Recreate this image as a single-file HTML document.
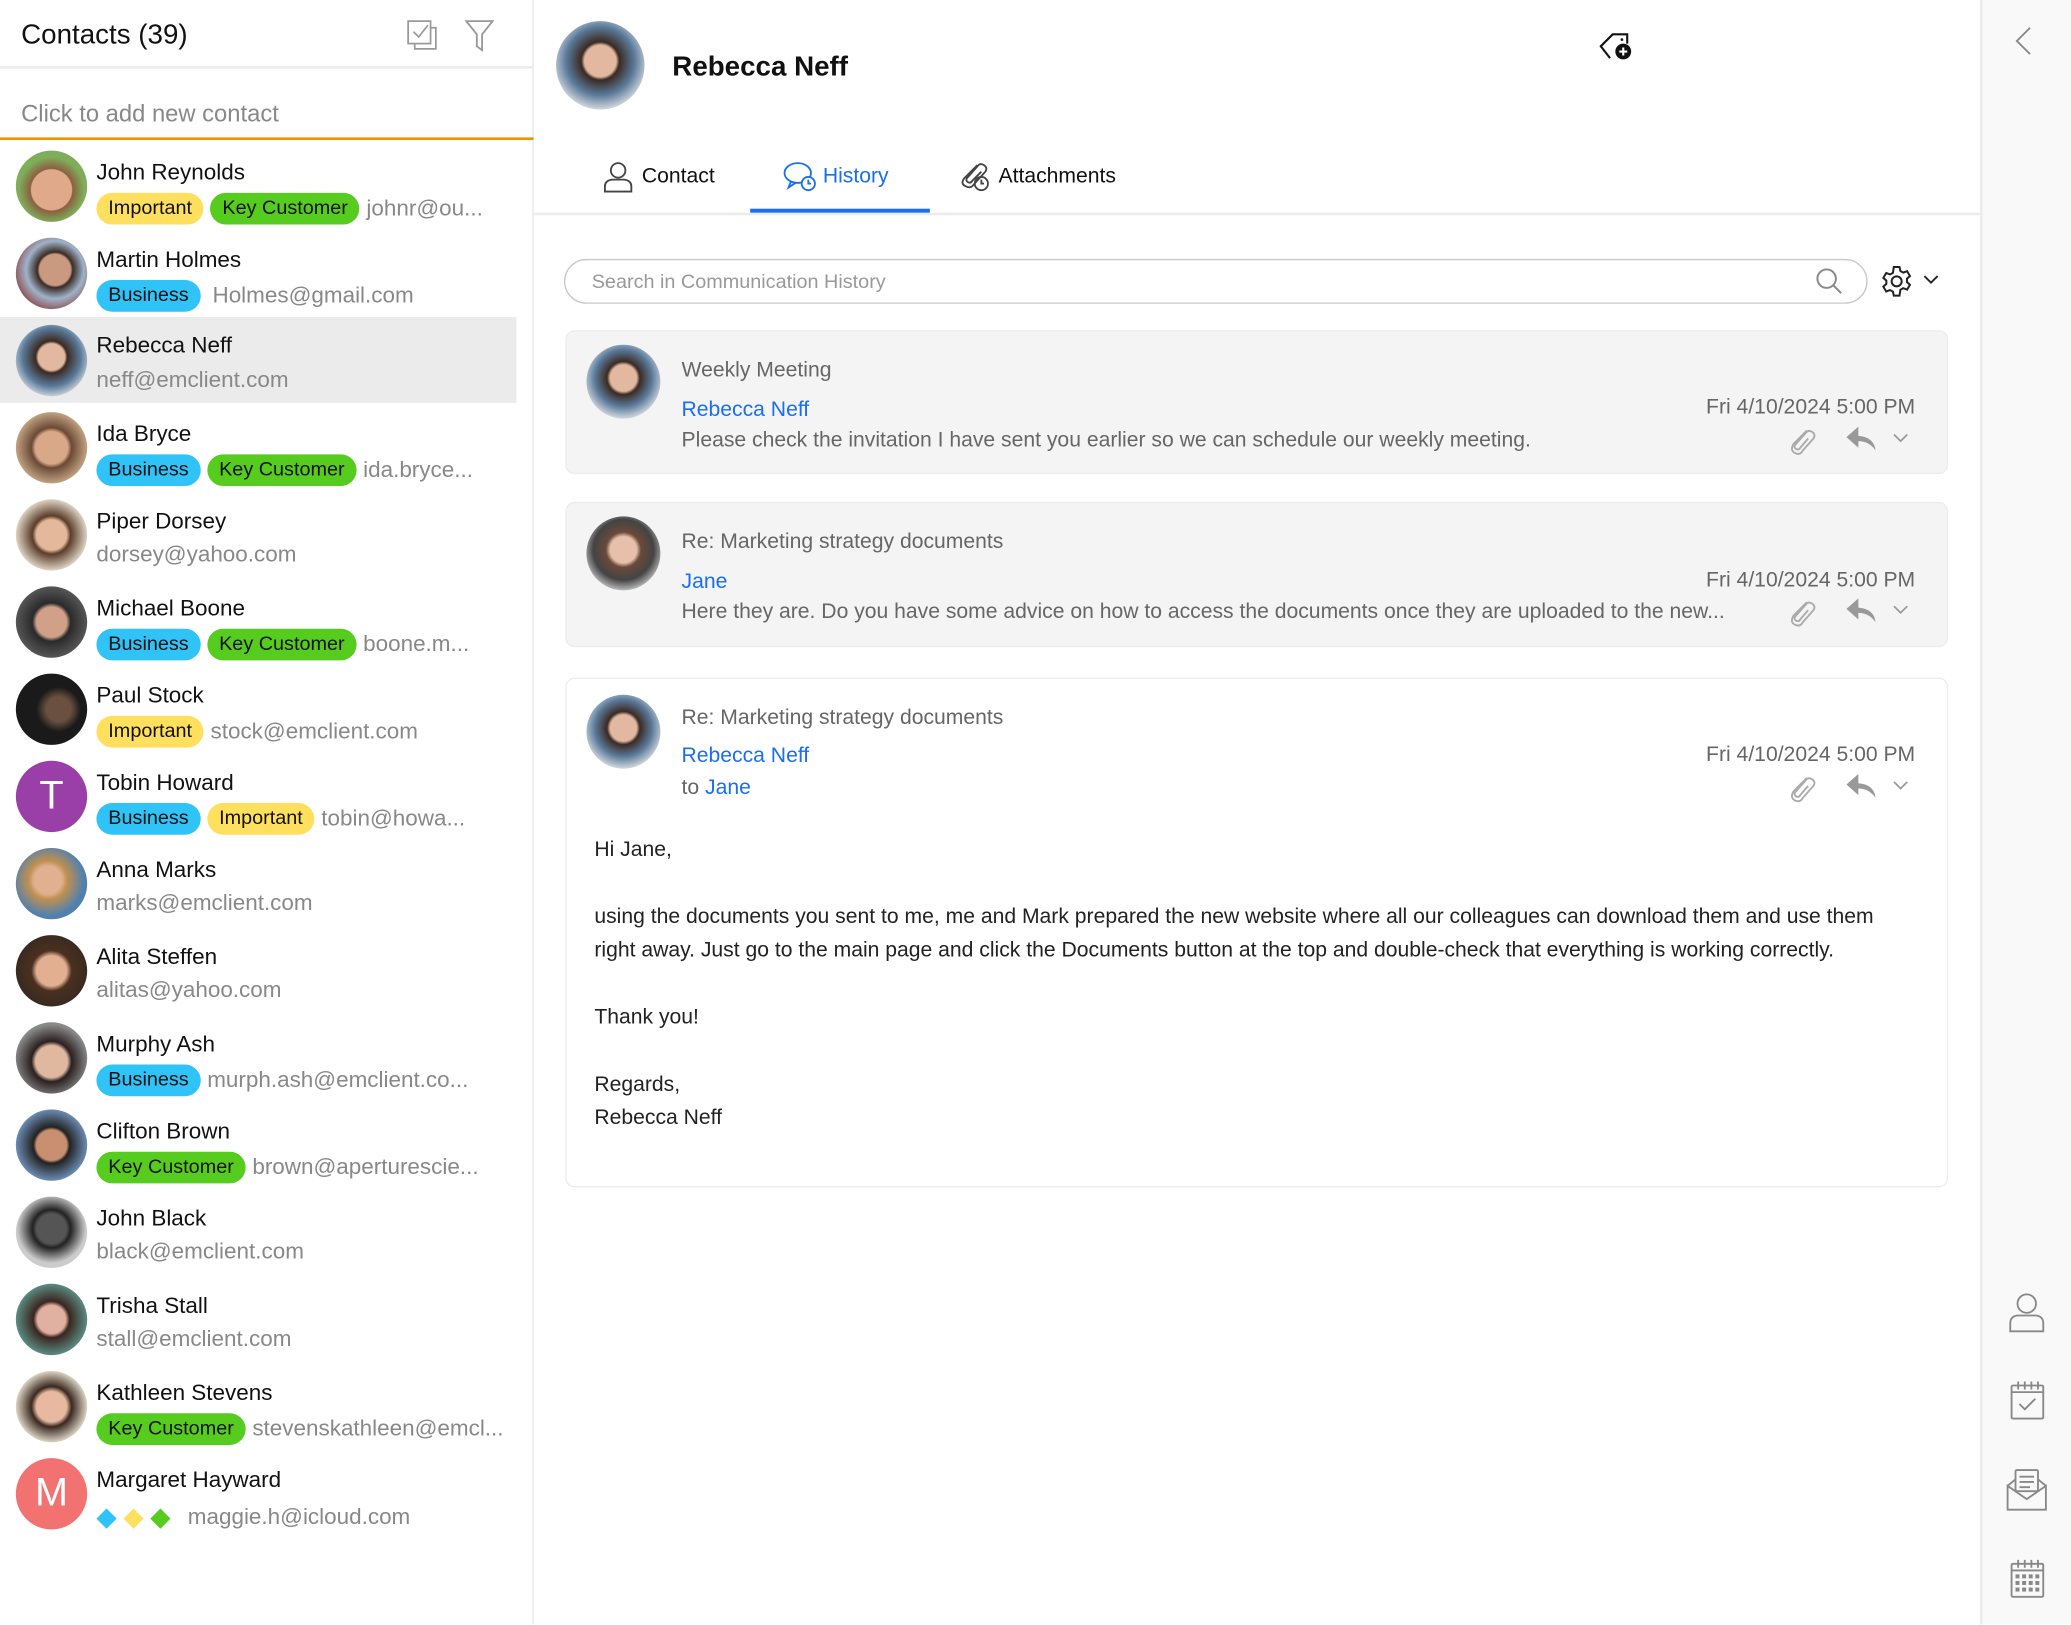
<!DOCTYPE html>
<html><head><meta charset="utf-8"><style>
*{box-sizing:border-box;margin:0;padding:0}
html,body{width:2071px;height:1624px;overflow:hidden;background:#fff;font-family:"Liberation Sans",sans-serif}
#w{position:absolute;left:0;top:0;width:1568px;height:1230px;transform:scale(1.32079);transform-origin:0 0}
.a{position:absolute}
.left{left:0;top:0;width:404px;height:1230px;border-right:1px solid #e6e6e6}
.row{position:absolute;left:0;width:391px;height:66px}
.av{position:absolute;left:12px;top:4px;width:54px;height:54px;border-radius:50%}
.nm{position:absolute;left:73px;top:11px;font-size:17px;color:#111;white-space:nowrap}
.l2{position:absolute;left:73px;top:36px;font-size:17px;color:#888;white-space:nowrap;display:flex;align-items:center;gap:5px}
.tg{display:inline-block;height:24px;line-height:24px;border-radius:12px;padding:0 9px;font-size:15px;color:#111}
.imp{background:#ffdf5e}.key{background:#56cc1f}.bus{background:#2fc3f8}
.card{position:absolute;left:428px;width:1047px;border-radius:7px;background:#f4f4f4;border:1px solid #ececec}
.cav{position:absolute;left:15px;top:10px;width:56px;height:56px;border-radius:50%}
.subj{position:absolute;left:87px;font-size:16px;color:#666}
.from{position:absolute;left:87px;font-size:16px;color:#1a6ef0}
.date{position:absolute;right:24px;font-size:16px;color:#666}
.prev{position:absolute;left:87px;font-size:16px;color:#666;white-space:nowrap}
.ic{position:absolute}
.body p{position:absolute;left:21px;font-size:16px;color:#222;white-space:nowrap}
</style></head><body><div id="w">
<div class="a left">
 <div class="a" style="left:16px;top:15px;font-size:21px;color:#111">Contacts (39)</div>
 <svg class="a" style="left:308px;top:15px" width="24" height="24" viewBox="0 0 24 24" fill="none" stroke="#999" stroke-width="1.3"><rect x="1" y="1" width="17" height="17"/><path d="M18 6h4v16H6v-4"/><path d="M5 9l4 4 7-9"/></svg>
 <svg class="a" style="left:352px;top:15px" width="22" height="24" viewBox="0 0 22 24" fill="none" stroke="#999" stroke-width="1.4"><path d="M1 1h20l-8 10v12l-4-3v-9z"/></svg>
 <div class="a" style="left:0;top:50px;width:403px;height:2px;background:#ececec"></div>
 <div class="a" style="left:16px;top:76px;font-size:18px;color:#888">Click to add new contact</div>
 <div class="a" style="left:0;top:104px;width:404px;height:2px;background:#f39200"></div>

 <div class="row" style="top:110px"><div class="av" style="background:radial-gradient(circle at 50% 55%,#e0a98a 0 38%,#8a6040 40%,#7fae5a 62%)"></div><div class="nm">John Reynolds</div><div class="l2"><span class="tg imp">Important</span><span class="tg key">Key Customer</span><span>johnr@ou...</span></div></div>
 <div class="row" style="top:176px"><div class="av" style="background:radial-gradient(circle at 55% 45%,#c99a80 0 28%,#3a2a25 32%,#9fb3c9 52%,#8a3a3a 80%)"></div><div class="nm">Martin Holmes</div><div class="l2"><span class="tg bus">Business</span><span style="margin-left:4px">Holmes@gmail.com</span></div></div>
 <div class="row" style="top:240px;background:#ebebeb;height:65px"><div class="av" style="top:6px;background:radial-gradient(circle at 50% 45%,#e2b8a0 0 25%,#3b2a22 30%,#5a7a9a 55%,#e8e8ea 80%)"></div><div class="nm" style="top:12px">Rebecca Neff</div><div class="l2" style="top:38px">neff@emclient.com</div></div>
 <div class="row" style="top:308px"><div class="av" style="background:radial-gradient(circle at 50% 50%,#d9a888 0 32%,#6a4a35 40%,#c0a080 70%)"></div><div class="nm">Ida Bryce</div><div class="l2"><span class="tg bus">Business</span><span class="tg key">Key Customer</span><span>ida.bryce...</span></div></div>
 <div class="row" style="top:374px"><div class="av" style="background:radial-gradient(circle at 50% 50%,#e4b89a 0 30%,#5a3d2a 38%,#dcd0c0 70%)"></div><div class="nm">Piper Dorsey</div><div class="l2">dorsey@yahoo.com</div></div>
 <div class="row" style="top:440px"><div class="av" style="background:radial-gradient(circle at 50% 50%,#d0a088 0 30%,#2a2a2a 38%,#555 70%)"></div><div class="nm">Michael Boone</div><div class="l2"><span class="tg bus">Business</span><span class="tg key">Key Customer</span><span>boone.m...</span></div></div>
 <div class="row" style="top:506px"><div class="av" style="background:radial-gradient(circle at 60% 50%,#6a5040 0 22%,#1a1a1a 40%)"></div><div class="nm">Paul Stock</div><div class="l2"><span class="tg imp">Important</span><span>stock@emclient.com</span></div></div>
 <div class="row" style="top:572px"><div class="av" style="background:#9b3fa8;color:#fff;font-size:30px;text-align:center;line-height:54px">T</div><div class="nm">Tobin Howard</div><div class="l2"><span class="tg bus">Business</span><span class="tg imp">Important</span><span>tobin@howa...</span></div></div>
 <div class="row" style="top:638px"><div class="av" style="background:radial-gradient(circle at 45% 45%,#e0b090 0 25%,#c09050 35%,#5080b0 65%)"></div><div class="nm">Anna Marks</div><div class="l2">marks@emclient.com</div></div>
 <div class="row" style="top:704px"><div class="av" style="background:radial-gradient(circle at 50% 50%,#e2b090 0 30%,#4a3020 40%,#3a2a20 70%)"></div><div class="nm">Alita Steffen</div><div class="l2">alitas@yahoo.com</div></div>
 <div class="row" style="top:770px"><div class="av" style="background:radial-gradient(circle at 50% 55%,#e0b8a0 0 30%,#2a2020 38%,#8a8a8a 70%)"></div><div class="nm">Murphy Ash</div><div class="l2"><span class="tg bus">Business</span><span>murph.ash@emclient.co...</span></div></div>
 <div class="row" style="top:836px"><div class="av" style="background:radial-gradient(circle at 50% 50%,#c89070 0 30%,#222 36%,#6a8ab0 70%)"></div><div class="nm">Clifton Brown</div><div class="l2"><span class="tg key">Key Customer</span><span>brown@aperturescie...</span></div></div>
 <div class="row" style="top:902px"><div class="av" style="background:radial-gradient(circle at 50% 45%,#555 0 28%,#222 36%,#ccc 65%)"></div><div class="nm">John Black</div><div class="l2">black@emclient.com</div></div>
 <div class="row" style="top:968px"><div class="av" style="background:radial-gradient(circle at 50% 50%,#e0b0a0 0 28%,#3a2520 36%,#5a8a80 70%)"></div><div class="nm">Trisha Stall</div><div class="l2">stall@emclient.com</div></div>
 <div class="row" style="top:1034px"><div class="av" style="background:radial-gradient(circle at 50% 50%,#e8b8a0 0 30%,#3a2820 40%,#d8d0c0 70%)"></div><div class="nm">Kathleen Stevens</div><div class="l2"><span class="tg key">Key Customer</span><span>stevenskathleen@emcl...</span></div></div>
 <div class="row" style="top:1100px"><div class="av" style="background:#f27272;color:#fff;font-size:30px;text-align:center;line-height:54px">M</div><div class="nm">Margaret Hayward</div><div class="l2"><span style="color:#2fc3f8;font-size:20px">&#9670;</span><span style="color:#ffdf5e;font-size:20px">&#9670;</span><span style="color:#56cc1f;font-size:20px">&#9670;</span><span style="margin-left:8px">maggie.h@icloud.com</span></div></div>
</div>

<!-- middle -->
<div class="a" style="left:421px;top:16px;width:67px;height:67px;border-radius:50%;background:radial-gradient(circle at 50% 45%,#e2b8a0 0 24%,#3b2a22 29%,#5a7a9a 52%,#e8e8ea 78%)"></div>
<div class="a" style="left:509px;top:39px;font-size:21px;font-weight:bold;color:#111">Rebecca Neff</div>
<svg class="a" style="left:1210px;top:20px" width="28" height="28" viewBox="0 0 28 28"><path d="M18 6h-7l-9 9 7 9" fill="none" stroke="#111" stroke-width="1.6"/><path d="M18 6h4v7" fill="none" stroke="#111" stroke-width="1.6"/><circle cx="18" cy="10" r="1" fill="#111"/><circle cx="19" cy="19" r="6" fill="#111"/><path d="M19 16v6M16 19h6" stroke="#fff" stroke-width="1.6"/></svg>

<svg class="a" style="left:457px;top:122px" width="22" height="24" viewBox="0 0 22 24" fill="none" stroke="#444" stroke-width="1.4"><circle cx="11" cy="7" r="5.5"/><path d="M1 23v-4q0-4 5-5h10q5 1 5 5v4z"/></svg>
<div class="a" style="left:486px;top:125px;font-size:16px;color:#111">Contact</div>
<svg class="a" style="left:593px;top:122px" width="26" height="24" viewBox="0 0 26 24" fill="none" stroke="#1a6ef0" stroke-width="1.4"><ellipse cx="11" cy="9" rx="10" ry="7.5"/><path d="M6 15l-2 5 6-4"/><circle cx="19" cy="17" r="5" fill="#fff"/><path d="M19 14v3h2"/></svg>
<div class="a" style="left:623px;top:125px;font-size:16px;color:#1a6ef0">History</div>
<div class="a" style="left:568px;top:158px;width:136px;height:4px;background:#1a6ef0"></div>
<svg class="a" style="left:725px;top:121px" width="25" height="25" viewBox="0 0 25 25" fill="none" stroke="#444" stroke-width="1.4"><path d="M15 4L5 14q-3 4 1 6t6-1l9-10q2-3-1-5t-5 1l-8 9q-1 2 1 3t3-1l7-7"/><circle cx="18" cy="18" r="5"/><path d="M18 15v3h2"/></svg>
<div class="a" style="left:756px;top:125px;font-size:16px;color:#111">Attachments</div>
<div class="a" style="left:404px;top:161px;width:1096px;height:2px;background:#ececec"></div>

<div class="a" style="left:427px;top:196px;width:987px;height:34px;border:1.5px solid #c8c8c8;border-radius:17px"></div>
<div class="a" style="left:448px;top:205px;font-size:15px;color:#999">Search in Communication History</div>
<svg class="a" style="left:1374px;top:202px" width="22" height="22" viewBox="0 0 22 22" fill="none" stroke="#888" stroke-width="1.5"><circle cx="9" cy="9" r="7"/><path d="M14 14l6 6"/></svg>
<svg class="a" style="left:1423px;top:200px" width="26" height="26" viewBox="0 0 24 24" fill="none" stroke="#222" stroke-width="1.4"><circle cx="12" cy="12" r="3.5"/><path d="M10 2h4l.6 2.8 2 1.1 2.7-1 2 3.4-2.1 1.9v2.3l2.1 1.9-2 3.4-2.7-1-2 1.1L14 22h-4l-.6-2.8-2-1.1-2.7 1-2-3.4 2.1-1.9V11.5L2.7 9.6l2-3.4 2.7 1 2-1.1z"/></svg>
<svg class="a" style="left:1456px;top:208px" width="12" height="8" viewBox="0 0 12 8" fill="none" stroke="#222" stroke-width="1.4"><path d="M1 1l5 5 5-5"/></svg>

<!-- card 1 -->
<div class="card" style="top:250px;height:109px">
 <div class="cav" style="background:radial-gradient(circle at 50% 45%,#e2b8a0 0 24%,#3b2a22 30%,#5a7a9a 52%,#e8e8ea 78%)"></div>
 <div class="subj" style="top:21px">Weekly Meeting</div>
 <div class="from" style="top:51px">Rebecca Neff</div>
 <div class="date" style="top:49px">Fri 4/10/2024 5:00 PM</div>
 <div class="prev" style="top:74px">Please check the invitation I have sent you earlier so we can schedule our weekly meeting.</div>
 <svg class="ic" style="left:924px;top:71px" width="22" height="24" viewBox="0 0 22 24" fill="none" stroke="#aaa" stroke-width="1.4"><path d="M15 4L5 14q-3 5 1 7t6-2l8-9q2-3-1-5t-5 1l-8 9q-1 2 1 3t3-1l6-7"/></svg>
 <svg class="ic" style="left:968px;top:70px" width="24" height="22" viewBox="0 0 24 22"><path d="M10 2L1 10l9 8v-5q8 0 13 7-1-10-13-11z" fill="#999"/></svg>
 <svg class="ic" style="left:1004px;top:77px" width="12" height="8" viewBox="0 0 12 8" fill="none" stroke="#999" stroke-width="1.3"><path d="M1 1l5 5 5-5"/></svg>
</div>
<!-- card 2 -->
<div class="card" style="top:380px;height:110px">
 <div class="cav" style="background:radial-gradient(circle at 50% 45%,#e6c0aa 0 24%,#6a4a3a 32%,#444 55%,#ddd 80%)"></div>
 <div class="subj" style="top:21px">Re: Marketing strategy documents</div>
 <div class="from" style="top:51px">Jane</div>
 <div class="date" style="top:50px">Fri 4/10/2024 5:00 PM</div>
 <div class="prev" style="top:74px">Here they are. Do you have some advice on how to access the documents once they are uploaded to the new...</div>
 <svg class="ic" style="left:924px;top:71px" width="22" height="24" viewBox="0 0 22 24" fill="none" stroke="#aaa" stroke-width="1.4"><path d="M15 4L5 14q-3 5 1 7t6-2l8-9q2-3-1-5t-5 1l-8 9q-1 2 1 3t3-1l6-7"/></svg>
 <svg class="ic" style="left:968px;top:70px" width="24" height="22" viewBox="0 0 24 22"><path d="M10 2L1 10l9 8v-5q8 0 13 7-1-10-13-11z" fill="#999"/></svg>
 <svg class="ic" style="left:1004px;top:77px" width="12" height="8" viewBox="0 0 12 8" fill="none" stroke="#999" stroke-width="1.3"><path d="M1 1l5 5 5-5"/></svg>
</div>
<!-- card 3 -->
<div class="card body" style="top:513px;height:386px;background:#fff;border:1.5px solid #ececec">
 <div class="cav" style="top:12px;background:radial-gradient(circle at 50% 45%,#e2b8a0 0 24%,#3b2a22 30%,#5a7a9a 52%,#e8e8ea 78%)"></div>
 <div class="subj" style="top:21px">Re: Marketing strategy documents</div>
 <div class="from" style="top:50px">Rebecca Neff</div>
 <div class="date" style="top:49px">Fri 4/10/2024 5:00 PM</div>
 <div class="prev" style="top:74px;color:#666">to <span style="color:#1a6ef0">Jane</span></div>
 <svg class="ic" style="left:924px;top:71px" width="22" height="24" viewBox="0 0 22 24" fill="none" stroke="#aaa" stroke-width="1.4"><path d="M15 4L5 14q-3 5 1 7t6-2l8-9q2-3-1-5t-5 1l-8 9q-1 2 1 3t3-1l6-7"/></svg>
 <svg class="ic" style="left:968px;top:70px" width="24" height="22" viewBox="0 0 24 22"><path d="M10 2L1 10l9 8v-5q8 0 13 7-1-10-13-11z" fill="#999"/></svg>
 <svg class="ic" style="left:1004px;top:77px" width="12" height="8" viewBox="0 0 12 8" fill="none" stroke="#999" stroke-width="1.3"><path d="M1 1l5 5 5-5"/></svg>
 <p style="top:121px">Hi Jane,</p>
 <p style="top:172px">using the documents you sent to me, me and Mark prepared the new website where all our colleagues can download them and use them</p>
 <p style="top:197px">right away. Just go to the main page and click the Documents button at the top and double-check that everything is working correctly.</p>
 <p style="top:248px">Thank you!</p>
 <p style="top:299px">Regards,</p>
 <p style="top:324px">Rebecca Neff</p>
</div>

<!-- right bar -->
<div class="a" style="left:1499px;top:0;width:69px;height:1230px;background:#f9f9f9;border-left:2px solid #ececec"></div>
<svg class="a" style="left:1525px;top:20px" width="14" height="22" viewBox="0 0 14 22" fill="none" stroke="#888" stroke-width="1.4"><path d="M12 1L2 11l10 10"/></svg>
<svg class="a" style="left:1521px;top:979px" width="27" height="30" viewBox="0 0 27 30" fill="none" stroke="#888" stroke-width="1.4"><circle cx="13.5" cy="8" r="7"/><path d="M1 29v-6q0-5 5-6h15q5 1 5 6v6z"/></svg>
<svg class="a" style="left:1522px;top:1045px" width="26" height="30" viewBox="0 0 26 30" fill="none" stroke="#888" stroke-width="1.4"><rect x="1" y="4" width="24" height="25" rx="1"/><path d="M1 9h24M6 1v6M11 1v6M16 1v6M21 1v6M7 18l4 4 8-8"/></svg>
<svg class="a" style="left:1519px;top:1112px" width="31" height="32" viewBox="0 0 31 32" fill="none" stroke="#888" stroke-width="1.4"><path d="M1 13v18h29V13L15.5 23z"/><path d="M1 13l6-5M30 13l-6-5"/><rect x="7" y="1" width="17" height="16" rx="1"/><path d="M10 6h11M10 10h11M10 14h8"/></svg>
<svg class="a" style="left:1522px;top:1180px" width="26" height="30" viewBox="0 0 26 30"><g fill="none" stroke="#888" stroke-width="1.4"><rect x="1" y="4" width="24" height="25" rx="1"/><path d="M1 9h24M6 1v6M11 1v6M16 1v6M21 1v6"/></g><g fill="#888"><rect x="4" y="12" width="3" height="3"/><rect x="9" y="12" width="3" height="3"/><rect x="14" y="12" width="3" height="3"/><rect x="19" y="12" width="3" height="3"/><rect x="4" y="17" width="3" height="3"/><rect x="9" y="17" width="3" height="3"/><rect x="14" y="17" width="3" height="3"/><rect x="19" y="17" width="3" height="3"/><rect x="4" y="22" width="3" height="3"/><rect x="9" y="22" width="3" height="3"/><rect x="14" y="22" width="3" height="3"/><rect x="19" y="22" width="3" height="3"/></g></svg>
</div></body></html>
